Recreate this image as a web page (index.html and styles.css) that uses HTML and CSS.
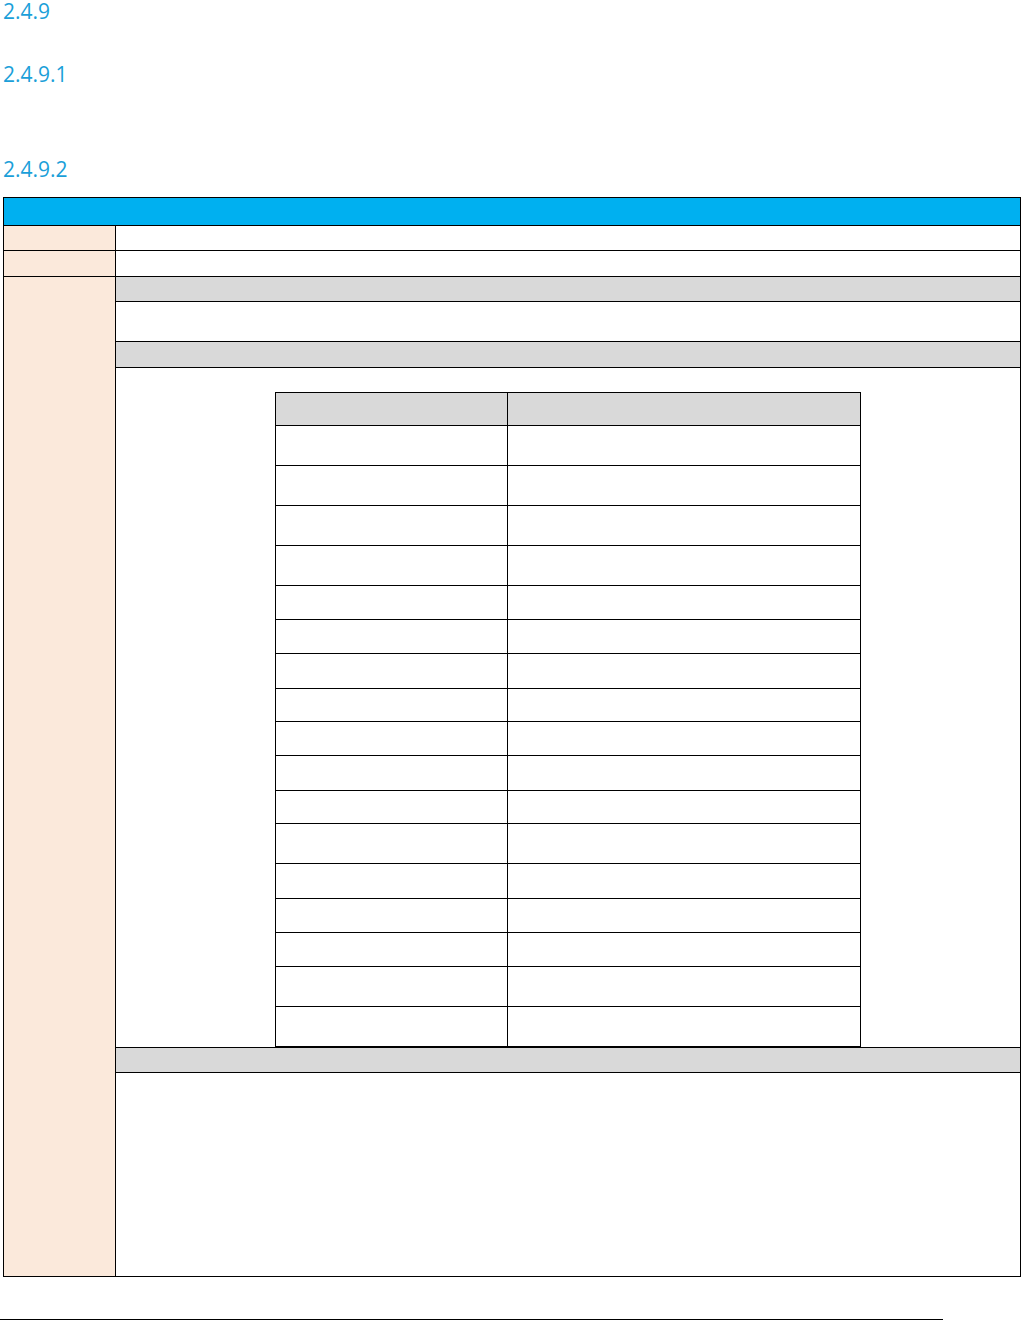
FILE: index.html
```html
<!DOCTYPE html>
<html lang="en">
  <head>
    <meta charset="UTF-8" />
    <meta name="viewport" content="width=device-width, initial-scale=1.0" />
    <title>2.4.9</title>
    <link rel="stylesheet" href="styles.css">
  </head>
  <body>
    <h2 class="heading first">2.4.9</h2>
    <h3 class="heading second">2.4.9.1</h3>
    <h3 class="heading third">2.4.9.2</h3>

    <div class="form">
      <div class="form-title"></div>
      <div class="form-row">
        <div class="label"></div>
        <div class="value"></div>
      </div>
      <div class="form-row row-b">
        <div class="label"></div>
        <div class="value"></div>
      </div>
      <div class="form-body">
        <div class="label"></div>
        <div class="sections">
          <div class="section-head"></div>
          <div class="section-text"></div>
          <div class="section-head s2"></div>
          <div class="section-table">
            <div class="grid">
              <div class="grid-row grid-head"><div class="c1"></div><div class="c2"></div></div>
              <div class="grid-row h40"><div class="c1"></div><div class="c2"></div></div>
              <div class="grid-row h40"><div class="c1"></div><div class="c2"></div></div>
              <div class="grid-row h40"><div class="c1"></div><div class="c2"></div></div>
              <div class="grid-row h40"><div class="c1"></div><div class="c2"></div></div>
              <div class="grid-row h34"><div class="c1"></div><div class="c2"></div></div>
              <div class="grid-row h34"><div class="c1"></div><div class="c2"></div></div>
              <div class="grid-row h35"><div class="c1"></div><div class="c2"></div></div>
              <div class="grid-row h33"><div class="c1"></div><div class="c2"></div></div>
              <div class="grid-row h34"><div class="c1"></div><div class="c2"></div></div>
              <div class="grid-row h35"><div class="c1"></div><div class="c2"></div></div>
              <div class="grid-row h33"><div class="c1"></div><div class="c2"></div></div>
              <div class="grid-row h40"><div class="c1"></div><div class="c2"></div></div>
              <div class="grid-row h35"><div class="c1"></div><div class="c2"></div></div>
              <div class="grid-row h34"><div class="c1"></div><div class="c2"></div></div>
              <div class="grid-row h34"><div class="c1"></div><div class="c2"></div></div>
              <div class="grid-row h40"><div class="c1"></div><div class="c2"></div></div>
              <div class="grid-row h40"><div class="c1"></div><div class="c2"></div></div>
            </div>
          </div>
          <div class="section-head s3"></div>
          <div class="section-notes"></div>
        </div>
      </div>
    </div>

    <div class="footer-rule"></div>
  </body>
</html>
```

FILE: styles.css
```css
* {
  box-sizing: border-box;
}
body {
  margin: 0;
  font-family: "Open Sans", "Liberation Sans", sans-serif;
  background-color: #fff;
}
.heading {
  margin: 0;
  padding-left: 3px;
  font-size: 21px;
  font-weight: 400;
  line-height: 22px;
  color: #1b9fd9;
}
.second {
  margin-top: 41px;
}
.third {
  margin-top: 73px;
}

/* outer form table */
.form {
  margin: 17px 0 0 3px;
  width: 1018px;
  border: 1px solid #000;
}
.form-title {
  height: 27px;
  background-color: #00b0f0;
}
.form-row {
  display: flex;
  height: 25px;
  border-top: 1px solid #000;
}
.form-row.row-b {
  height: 26px;
}
.label {
  width: 112px;
  flex-shrink: 0;
  background-color: #fbe9db;
  border-right: 1px solid #000;
}
.value {
  flex: 1;
}
.form-body {
  display: flex;
  border-top: 1px solid #000;
}
.sections {
  flex: 1;
}
.section-head {
  height: 24px;
  background-color: #d9d9d9;
}
.section-head.s2 {
  height: 26px;
  border-top: 1px solid #000;
}
.section-head.s3 {
  height: 25px;
  border-top: 1px solid #000;
}
.section-text {
  height: 40px;
  border-top: 1px solid #000;
}
.section-table {
  border-top: 1px solid #000;
  padding-top: 24px;
  display: flex;
  justify-content: center;
}
.section-notes {
  height: 204px;
  border-top: 1px solid #000;
}

/* inner table */
.grid {
  width: 586px;
  border: 1px solid #000;
}
.grid-row {
  display: flex;
}
.grid-row + .grid-row {
  border-top: 1px solid #000;
}
.grid-head {
  height: 32px;
  background-color: #d9d9d9;
}
.c1 {
  width: 232px;
  border-right: 1px solid #000;
}
.c2 {
  flex: 1;
}
.h33 { height: 33px; }
.h34 { height: 34px; }
.h35 { height: 35px; }
.h40 { height: 40px; }

.footer-rule {
  margin-top: 42px;
  width: 943px;
  height: 1px;
  background-color: #000;
}
```
